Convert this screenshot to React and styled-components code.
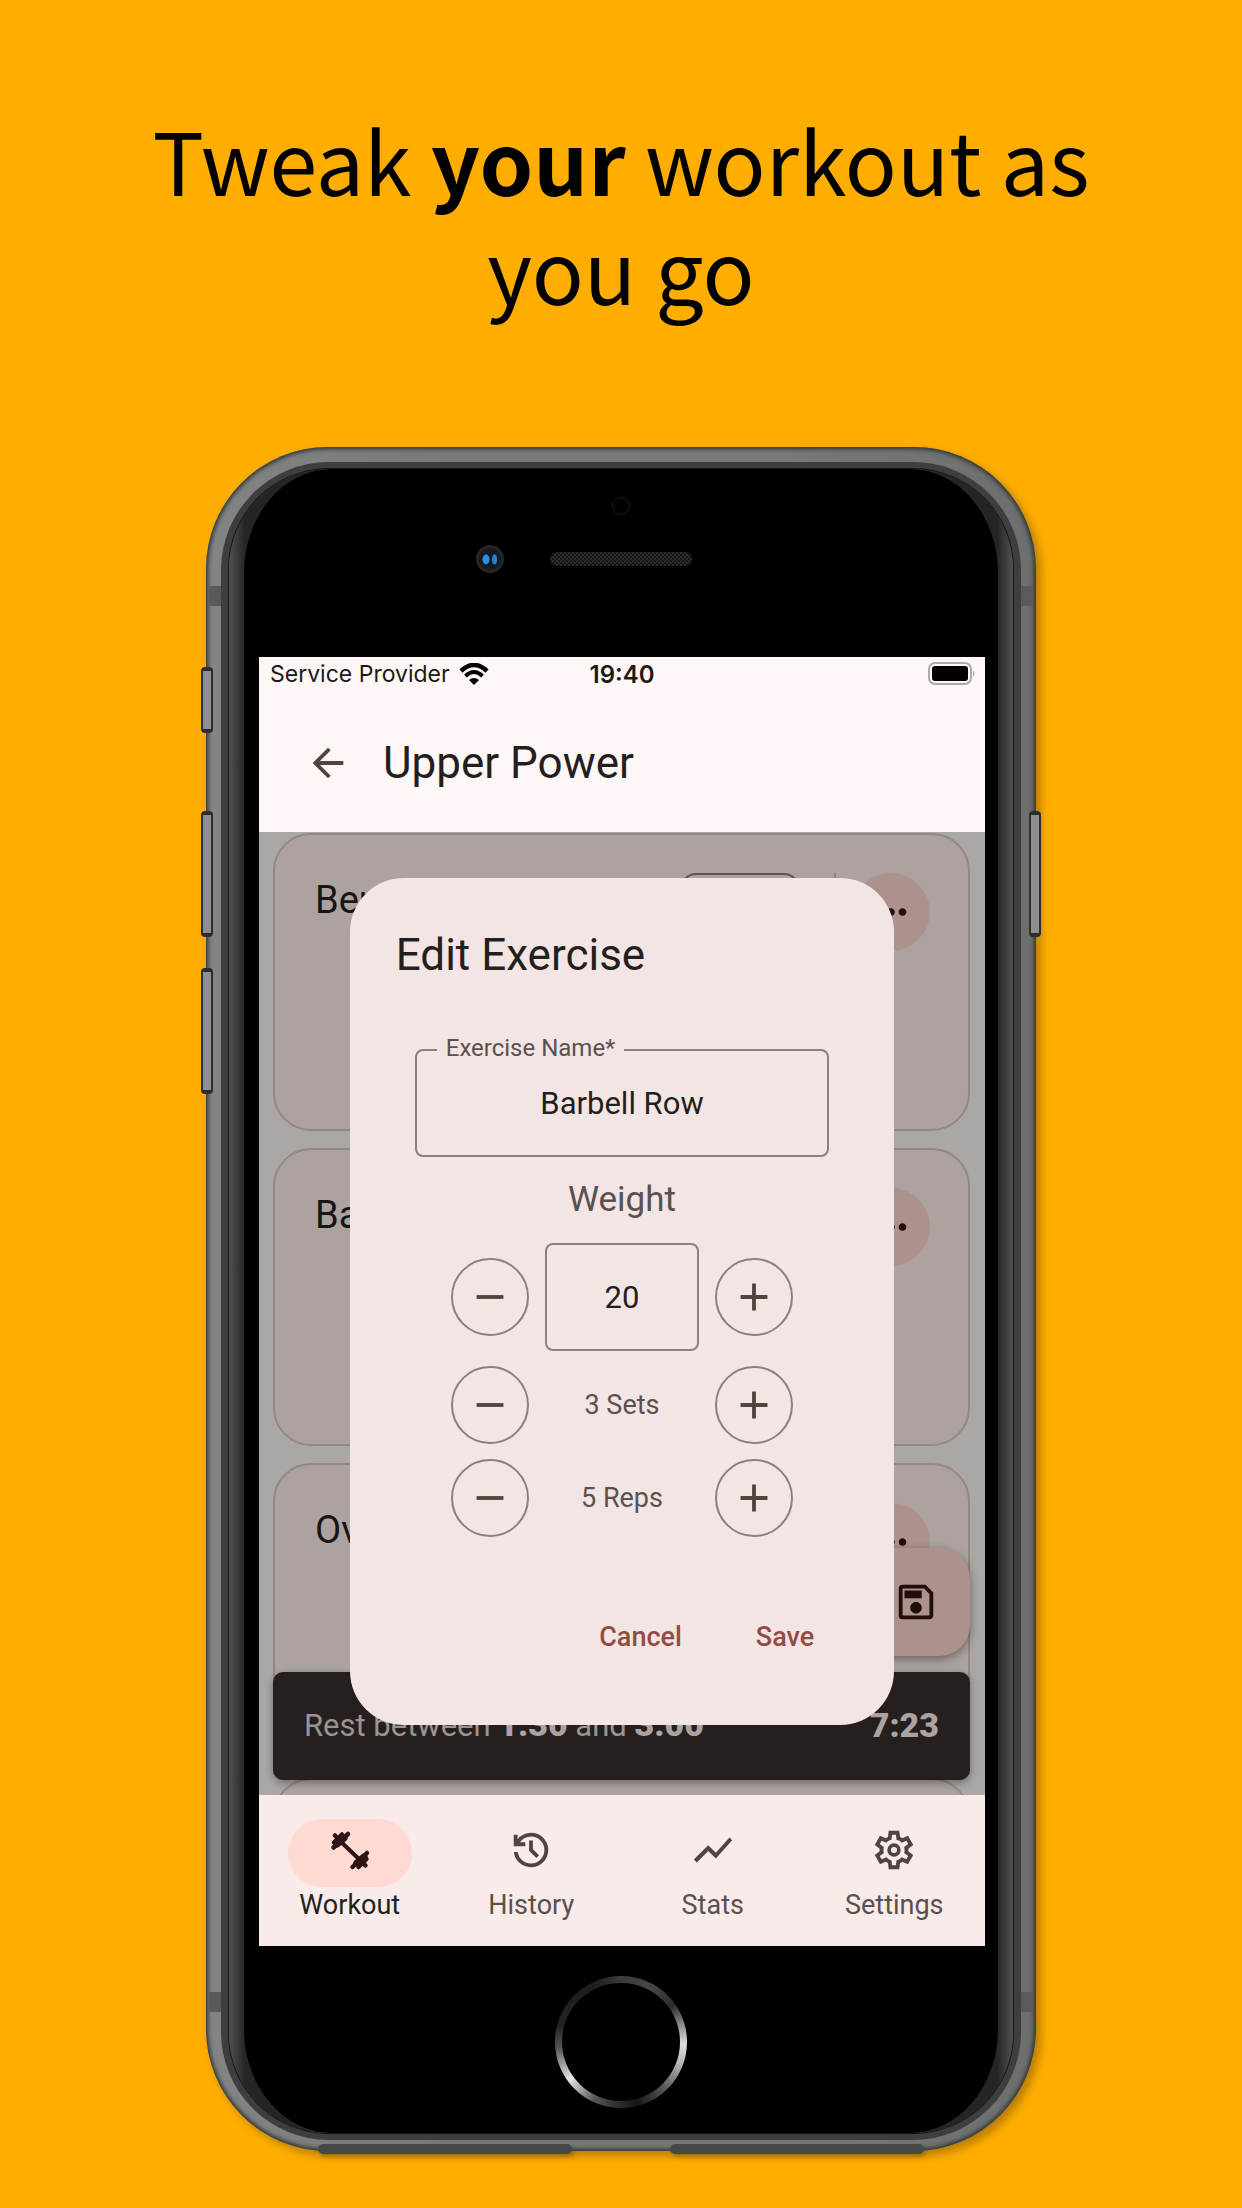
import React from "react";
import styled, { createGlobalStyle } from "styled-components";
import {
  MdAdd,
  MdArrowBack,
  MdMoreHoriz,
  MdOutlineSave,
  MdRemove,
  MdShowChart,
} from "react-icons/md";

const GlobalStyle = createGlobalStyle`
  *, *::before, *::after { box-sizing: border-box; }
  body { margin: 0; background: #ffae00; }
  button, input { font: inherit; color: inherit; margin: 0; }
  h1, h2, h3, p { margin: 0; font-weight: 400; }
`;

const Page = styled.main`
  min-height: 100vh;
  padding: 104px 40px 53px;
  background: #ffae00;
  display: flex;
  flex-direction: column;
  align-items: center;
  gap: 125px;
  font-family: Roboto, "Liberation Sans", sans-serif;
`;

const Headline = styled.h1`
  max-width: 1000px;
  text-align: center;
  color: #000;
  font-family: "Noto Sans CJK SC", "Noto Sans", sans-serif;
  font-size: 86px;
  line-height: 109px;
  strong { font-weight: 700; }
`;

/* ---------- phone hardware ---------- */

const Phone = styled.section`
  position: relative;
  isolation: isolate;
  width: 100%;
  max-width: 830px;
  padding: 15px 15px 11px;
  border-radius: 122px;
  background: linear-gradient(90deg, #828584, #767979 30%, #767979 70%, #6c6f6e);
  box-shadow: inset 0 0 4px 2px #2e3130, 5px 5px 8px rgba(60, 40, 0, 0.35);
`;

const Rim = styled.div`
  padding: 7px 8px;
  border-radius: 108px;
  background: #3c3f3e;
`;

const Glass = styled.div`
  padding: 0 15px;
  border-radius: 100px;
  overflow: hidden;
  background: linear-gradient(90deg, #505150, #242625 16px, #242625 calc(100% - 16px), #505150);
  box-shadow: 0 0 0 1px #141515;
`;

const Face = styled.div`
  padding: 0 13px 0 15px;
  border-radius: 88px / 104px;
  background: #000;
`;

const SideKey = styled.span`
  position: absolute;
  z-index: -1;
  width: 12px;
  ${(p) => p.$side}: -5px;
  top: ${(p) => p.$top}px;
  height: ${(p) => p.$height}px;
  border-radius: 4px;
  border: 2px solid #2b2e2d;
  border-top-width: 4px;
  border-bottom-width: 4px;
  background: #8d908f;
`;

const Antenna = styled.span`
  position: absolute;
  ${(p) => p.$side}: 3px;
  ${(p) => p.$edge}: 139px;
  width: 12px;
  height: 20px;
  background: #585b5a;
`;

const Foot = styled.span`
  position: absolute;
  z-index: -1;
  bottom: -3px;
  ${(p) => p.$side}: 112px;
  width: 254px;
  height: 10px;
  border-radius: 10px;
  background: #454847;
  box-shadow: 2px 3px 4px rgba(60, 40, 0, 0.3);
`;

const TopBezel = styled.div`
  height: 188px;
  padding: 28px 2px 0 0;
  display: flex;
  flex-direction: column;
  align-items: center;
  gap: 30px;
`;

const Sensor = styled.span`
  width: 18px;
  height: 18px;
  border-radius: 50%;
  border: 1px solid #1e1e1e;
`;

const SpeakerRow = styled.div`
  width: 100%;
  display: grid;
  grid-template-columns: 1fr auto 1fr;
  align-items: center;
  column-gap: 46px;
`;

const Camera = styled.svg`
  justify-self: end;
  width: 28px;
  height: 28px;
`;

const Speaker = styled.span`
  width: 142px;
  height: 14px;
  border-radius: 7px;
  background-color: #161616;
  background-image: conic-gradient(#2c2c2c 25%, transparent 0 50%, #2c2c2c 0 75%, transparent 0);
  background-size: 4px 4px;
`;

const BottomBezel = styled.div`
  height: 187px;
  padding: 30px 2px 0 0;
  display: flex;
  justify-content: center;
`;

const HomeKey = styled.button`
  width: 132px;
  height: 132px;
  padding: 7px;
  border: 0;
  border-radius: 50%;
  background: conic-gradient(
    #3a3b3b, #454646 30deg, #2a2b2b 55deg, #777 70deg, #e0e0e0 92deg, #b5b6b6 110deg,
    #5c5d5d 135deg, #151616 165deg, #303131 185deg, #555656 205deg, #e6e6e6 234deg,
    #9a9b9b 250deg, #555 265deg, #222323 285deg, #1c1d1d 335deg, #3a3b3b
  );
  &::before {
    content: "";
    display: block;
    height: 100%;
    border-radius: 50%;
    background: #000;
  }
`;

/* ---------- app ---------- */

const Screen = styled.div`
  position: relative;
  aspect-ratio: 726 / 1289;
  display: flex;
  flex-direction: column;
  overflow: hidden;
  background: #fff7f5;
  color: #231f1e;
`;

const StatusBar = styled.div`
  height: 36px;
  padding: 0 11px 2px;
  display: grid;
  grid-template-columns: 1fr auto 1fr;
  align-items: center;
  font-family: Inter, "Liberation Sans", sans-serif;
  font-size: 23px;
  color: #1c1919;
  time { font-size: 24px; font-weight: 600; }
`;

const Carrier = styled.span`
  display: flex;
  align-items: center;
  gap: 9px;
`;

const Wifi = styled.svg`
  width: 30px;
  height: 22px;
`;

const Battery = styled.svg`
  justify-self: end;
  width: 46px;
  height: 24px;
  overflow: visible;
`;

const AppBar = styled.header`
  height: 139px;
  padding: 0 46px;
  display: flex;
  align-items: center;
  gap: 32px;
`;

const IconButton = styled.button`
  display: grid;
  place-items: center;
  padding: 0;
  border: 0;
  background: none;
  color: #51443f;
  font-size: 46px;
`;

const Title = styled.h2`
  font-size: 44px;
  line-height: 62px;
`;

const Content = styled.div`
  position: relative;
  flex: 1;
  min-height: 0;
  overflow: hidden;
  padding: 1px 15px 0 14px;
  display: flex;
  flex-direction: column;
  gap: 17px;
  background: #aaa7a5;
`;

const Card = styled.article`
  flex: none;
  height: 298px;
  padding: 38px 38px 38px 40px;
  border: 2px solid #928886;
  border-radius: 38px;
  background: #aca3a1;
  display: flex;
  align-items: flex-start;
`;

const CardTitle = styled.h3`
  flex: 1;
  font-size: 38px;
  line-height: 54px;
  color: #181514;
`;

const Chip = styled.span`
  width: 120px;
  height: 78px;
  border: 2px solid #5c5251;
  border-radius: 16px;
`;

const Divider = styled.span`
  width: 2px;
  height: 78px;
  margin: 0 16px 0 34px;
  background: #8c8280;
`;

const MoreButton = styled.button`
  display: grid;
  place-items: center;
  width: 78px;
  height: 78px;
  padding: 0;
  border: 0;
  border-radius: 50%;
  background: #ad918c;
  color: #1f0e0c;
  font-size: 46px;
`;

const Floating = styled.div`
  position: absolute;
  left: 14px;
  right: 15px;
  bottom: 15px;
  display: flex;
  flex-direction: column;
  align-items: flex-end;
  gap: 16px;
`;

const Fab = styled.button`
  display: grid;
  place-items: center;
  width: 108px;
  height: 108px;
  padding: 0;
  border: 0;
  border-radius: 31px;
  background: #ad918c;
  color: #1f0e0c;
  font-size: 46px;
  box-shadow: 0 3px 10px rgba(0, 0, 0, 0.4);
`;

const Snackbar = styled.div`
  align-self: stretch;
  height: 108px;
  padding: 0 31px 2px;
  display: flex;
  align-items: center;
  justify-content: space-between;
  border-radius: 10px;
  background: #251f1f;
  color: #9c9492;
  font-size: 31px;
  line-height: 40px;
  box-shadow: 0 3px 8px rgba(0, 0, 0, 0.35);
  strong { font-size: 34px; font-weight: 900; color: #aca3a1; }
`;

const NavBar = styled.nav`
  height: 151px;
  padding-top: 24px;
  display: grid;
  grid-template-columns: repeat(4, 1fr);
  background: #f8ebe9;
`;

const NavItem = styled.a`
  display: flex;
  flex-direction: column;
  align-items: center;
  gap: 2px;
  text-decoration: none;
  font-size: 27px;
  line-height: 32px;
  color: ${(p) => (p.$active ? "#231f1e" : "#5a504f")};
`;

const NavIcon = styled.span`
  display: grid;
  place-items: center;
  width: 124px;
  height: 68px;
  padding-bottom: 6px;
  border-radius: 34px;
  background: ${(p) => (p.$active ? "#ffdad4" : "transparent")};
  color: ${(p) => (p.$active ? "#2c1512" : "#4d4443")};
  font-size: 46px;
  svg { display: block; width: 46px; height: 46px; }
`;

/* ---------- dialog ---------- */

const Overlay = styled.div`
  position: absolute;
  inset: 0;
  display: flex;
  align-items: center;
  justify-content: center;
`;

const Dialog = styled.form`
  width: 75%;
  padding: 46px 46px 49px;
  border-radius: 54px;
  background: #f3e5e3;
  display: flex;
  flex-direction: column;
`;

const Fields = styled.div`
  margin-top: 63px;
  padding: 0 19px;
  display: flex;
  flex-direction: column;
  gap: 15px;
`;

const NameField = styled.div`
  position: relative;
  label {
    position: absolute;
    top: -15px;
    left: 22px;
    padding: 0 9px;
    background: #f3e5e3;
    color: #5a504f;
    font-size: 24px;
    line-height: 28px;
  }
`;

const Input = styled.input`
  display: block;
  width: ${(p) => p.$width};
  height: 108px;
  padding: 0;
  border: 2px solid #8c7f7d;
  border-radius: 8px;
  background: transparent;
  color: #231f1e;
  font-size: 31px;
  text-align: center;
  outline: 0;
`;

const WeightLabel = styled.label`
  text-align: center;
  color: #5a504f;
  font-size: 35px;
  line-height: 56px;
`;

const Stepper = styled.div`
  display: flex;
  align-items: center;
  justify-content: center;
  gap: 16px;
`;

const StepButton = styled.button`
  display: grid;
  place-items: center;
  width: 78px;
  height: 78px;
  padding: 0;
  border: 2px solid #8c7f7d;
  border-radius: 50%;
  background: transparent;
  color: #51443f;
  font-size: 46px;
`;

const StepValue = styled.output`
  width: 154px;
  text-align: center;
  color: #5a504f;
  font-size: 27px;
  line-height: 40px;
`;

const Actions = styled.div`
  margin-top: 61px;
  display: flex;
  justify-content: flex-end;
  gap: 6px;
`;

const TextButton = styled.button`
  height: 78px;
  padding: 0 34px;
  border: 0;
  background: none;
  color: #954b43;
  font-size: 27px;
  font-weight: 500;
`;

const DumbbellIcon = () => (
  <svg viewBox="0 0 46 46" fill="none" stroke="currentColor" strokeLinecap="round" aria-hidden="true">
    <path d="M12 13L34 34" strokeWidth="4" />
    <path d="M6.5 20.5L21 7M25.500 40L40 26" strokeWidth="4.500" />
    <path d="M7 15.500L15 7.500M31.500 40L39.500 32" strokeWidth="4.500" />
    <path d="M10 17L17 11M30 36L37 30" strokeWidth="7" />
    <path d="M8 8.500L10 10.500M38.500 38.500L36 36" strokeWidth="4.500" />
  </svg>
);

const HistoryIcon = () => (
  <svg viewBox="0 -960 960 960" fill="currentColor" aria-hidden="true">
    <path d="M480-120q-138 0-240.500-91.500T122-440h82q14 104 92.500 172T480-200q117 0 198.500-81.500T760-480q0-117-81.500-198.500T480-760q-69 0-129 32t-101 88h110v80H120v-240h80v94q51-64 124.500-99T480-840q75 0 140.500 28.500t114 77q48.500 48.500 77 114T840-480q0 75-28.500 140.500t-77 114q-48.500 48.500-114 77T480-120Zm112-192L440-464v-216h80v184l128 128-56 56Z" />
  </svg>
);

const SettingsIcon = () => (
  <svg viewBox="0 -960 960 960" fill="currentColor" fillRule="evenodd" aria-hidden="true">
    <path d="m370-80-16-128q-13-5-24.500-12T307-235l-119 50L78-375l103-78q-1-7-1-13.500v-27q0-6.500 1-13.500L78-585l110-190 119 50q11-8 23-15t24-12l16-128h220l16 128q13 5 24.500 12t22.500 15l119-50 110 190-103 78q1 7 1 13.500v27q0 6.500-2 13.500l103 78-110 190-118-50q-11 8-23 15t-24 12L590-80H370Zm70-80h79l14-106q31-8 57.500-23.500T639-327l99 41 39-68-86-65q5-14 7-29.500t2-31.500q0-16-2-31.500t-7-29.500l86-65-39-68-99 42q-22-23-48.500-38.500T533-694l-13-106h-79l-14 106q-31 8-57.500 23.500T321-633l-99-41-39 68 86 64q-5 15-7 30t-2 32q0 16 2 31t7 30l-86 65 39 68 99-42q22 23 48.500 38.500T427-266l13 106Z" />
    <circle cx="480" cy="-480" r="102" fill="none" stroke="currentColor" strokeWidth="76" />
  </svg>
);

const NAV = [
  { label: "Workout", icon: <DumbbellIcon />, active: true },
  { label: "History", icon: <HistoryIcon /> },
  { label: "Stats", icon: <MdShowChart /> },
  { label: "Settings", icon: <SettingsIcon /> },
];

const EXERCISES = ["Bench Press", "Barbell Row", "Overhead Press", "Lat Pulldown"];

function StepRow({ name, children }) {
  return (
    <Stepper>
      <StepButton type="button" aria-label={`Decrease ${name}`}><MdRemove /></StepButton>
      {children}
      <StepButton type="button" aria-label={`Increase ${name}`}><MdAdd /></StepButton>
    </Stepper>
  );
}

function EditDialog() {
  return (
    <Overlay>
      <Dialog role="dialog" aria-labelledby="dialog-title" onSubmit={(e) => e.preventDefault()}>
        <Title id="dialog-title">Edit Exercise</Title>
        <Fields>
          <NameField>
            <Input id="exercise-name" $width="100%" defaultValue="Barbell Row" />
            <label htmlFor="exercise-name">Exercise Name*</label>
          </NameField>
          <WeightLabel htmlFor="weight">Weight</WeightLabel>
          <StepRow name="weight">
            <Input id="weight" $width="154px" defaultValue="20" />
          </StepRow>
          <StepRow name="sets"><StepValue>3 Sets</StepValue></StepRow>
          <StepRow name="reps"><StepValue>5 Reps</StepValue></StepRow>
        </Fields>
        <Actions>
          <TextButton type="button">Cancel</TextButton>
          <TextButton type="submit">Save</TextButton>
        </Actions>
      </Dialog>
    </Overlay>
  );
}

export default function App() {
  return (
    <Page>
      <GlobalStyle />
      <Headline>Tweak <strong>your</strong> workout as you go</Headline>
      <Phone>
        <SideKey $side="left" $top={220} $height={66} />
        <SideKey $side="left" $top={364} $height={126} />
        <SideKey $side="left" $top={521} $height={126} />
        <SideKey $side="right" $top={364} $height={126} />
        <Foot $side="left" />
        <Foot $side="right" />
        <Antenna $side="left" $edge="top" />
        <Antenna $side="right" $edge="top" />
        <Antenna $side="left" $edge="bottom" />
        <Antenna $side="right" $edge="bottom" />
        <Rim>
          <Glass>
            <Face>
              <TopBezel>
                <Sensor />
                <SpeakerRow>
                  <Camera viewBox="0 0 28 28" aria-hidden="true">
                    <circle cx="14" cy="14" r="14" fill="#242525" />
                    <circle cx="14" cy="14" r="11" fill="#1a1b1b" />
                    <circle cx="14" cy="14" r="8.500" fill="#0d1a30" />
                    <ellipse cx="10" cy="14.500" rx="3.500" ry="5" fill="#2f8fd0" />
                    <ellipse cx="18.500" cy="14.500" rx="2.500" ry="5" fill="#2c7fc4" />
                  </Camera>
                  <Speaker />
                </SpeakerRow>
              </TopBezel>
              <Screen>
                <StatusBar>
                  <Carrier>
                    Service Provider
                    <Wifi viewBox="0 0 30 22" aria-hidden="true">
                      <path d="M2 8Q15-4 28 8" fill="none" stroke="#000" strokeWidth="4.500" />
                      <path d="M6.500 13Q15 5 23.500 13" fill="none" stroke="#000" strokeWidth="4" />
                      <path d="M15 22l-5-5q5-4 10 0z" fill="#000" />
                    </Wifi>
                  </Carrier>
                  <time>19:40</time>
                  <Battery viewBox="0 0 46 24" aria-hidden="true">
                    <rect x="1" y="1" width="42" height="21" rx="6" fill="none" stroke="#aea8a7" strokeWidth="2" />
                    <rect x="4" y="4" width="36" height="15" rx="3" fill="#000" />
                    <path d="M45 8q3 3.500 0 7z" fill="#aea8a7" />
                  </Battery>
                </StatusBar>
                <AppBar>
                  <IconButton type="button" aria-label="Back"><MdArrowBack /></IconButton>
                  <Title>Upper Power</Title>
                </AppBar>
                <Content>
                  {EXERCISES.map((name) => (
                    <Card key={name}>
                      <CardTitle>{name}</CardTitle>
                      <Chip />
                      <Divider />
                      <MoreButton type="button" aria-label={`${name} options`}><MdMoreHoriz /></MoreButton>
                    </Card>
                  ))}
                  <Floating>
                    <Fab type="button" aria-label="Save workout"><MdOutlineSave /></Fab>
                    <Snackbar role="status">
                      <span>Rest between <strong>1:30</strong> and <strong>3:00</strong></span>
                      <strong>7:23</strong>
                    </Snackbar>
                  </Floating>
                </Content>
                <NavBar>
                  {NAV.map((item) => (
                    <NavItem key={item.label} href={`#${item.label.toLowerCase()}`} $active={item.active}>
                      <NavIcon $active={item.active}>{item.icon}</NavIcon>
                      {item.label}
                    </NavItem>
                  ))}
                </NavBar>
                <EditDialog />
              </Screen>
              <BottomBezel>
                <HomeKey type="button" aria-label="Home" />
              </BottomBezel>
            </Face>
          </Glass>
        </Rim>
      </Phone>
    </Page>
  );
}
